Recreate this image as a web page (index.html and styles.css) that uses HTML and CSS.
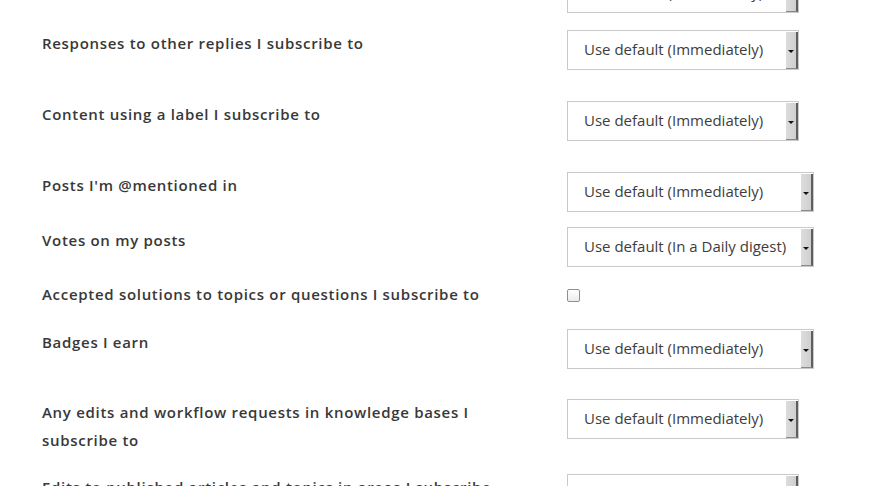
FILE: index.html
```html
<!DOCTYPE html>
<html lang="en">
<head>
<meta charset="utf-8">
<title>Notification settings</title>
<link rel="stylesheet" href="styles.css">
</head>
<body>
<div class="settings">
  <div class="row row--first">
    <div class="label"></div>
    <div class="select select--narrow"><span class="select-text">Use default (Immediately)</span><span class="select-btn"><span class="caret"></span></span></div>
  </div>
  <div class="row row--loose">
    <div class="label">Responses to other replies I subscribe to</div>
    <div class="select select--narrow"><span class="select-text">Use default (Immediately)</span><span class="select-btn"><span class="caret"></span></span></div>
  </div>
  <div class="row row--loose">
    <div class="label">Content using a label I subscribe to</div>
    <div class="select select--narrow"><span class="select-text">Use default (Immediately)</span><span class="select-btn"><span class="caret"></span></span></div>
  </div>
  <div class="row">
    <div class="label">Posts I'm @mentioned in</div>
    <div class="select select--wide"><span class="select-text">Use default (Immediately)</span><span class="select-btn"><span class="caret"></span></span></div>
  </div>
  <div class="row row--tight">
    <div class="label">Votes on my posts</div>
    <div class="select select--wide"><span class="select-text">Use default (In a Daily digest)</span><span class="select-btn"><span class="caret"></span></span></div>
  </div>
  <div class="row row--check">
    <div class="label">Accepted solutions to topics or questions I subscribe to</div>
    <div class="check-wrap"><span class="checkbox"></span></div>
  </div>
  <div class="row row--loose2">
    <div class="label">Badges I earn</div>
    <div class="select select--wide"><span class="select-text">Use default (Immediately)</span><span class="select-btn"><span class="caret"></span></span></div>
  </div>
  <div class="row row--multi">
    <div class="label">Any edits and workflow requests in knowledge bases I subscribe to</div>
    <div class="select select--narrow"><span class="select-text">Use default (Immediately)</span><span class="select-btn"><span class="caret"></span></span></div>
  </div>
  <div class="row">
    <div class="label">Edits to published articles and topics in areas I subscribe to</div>
    <div class="select select--narrow"><span class="select-text">Use default (Immediately)</span><span class="select-btn"><span class="caret"></span></span></div>
  </div>
</div>
</body>
</html>
```
FILE: styles.css
```css
html, body {
  margin: 0;
  padding: 0;
  background: #ffffff;
  overflow: hidden;
}

body {
  font-family: "Open Sans", "Liberation Sans", sans-serif;
  color: #3b3b3b;
}

.settings {
  display: flex;
  flex-direction: column;
  padding-left: 42px;
  margin-top: -27px;
}

.row {
  display: flex;
  align-items: flex-start;
  margin-bottom: 15px;
}

.row--first { margin-bottom: 17px; }
.row--loose { margin-bottom: 31px; }
.row--tight { margin-bottom: 14px; }
.row--check { margin-bottom: 20px; }
.row--loose2 { margin-bottom: 30px; }
.row--multi { margin-bottom: 20px; }

.label {
  width: 456px;
  margin-right: 69px;
  font-size: 15px;
  font-weight: 600;
  line-height: 28px;
  letter-spacing: 0.7px;
  color: #383838;
  margin-top: -1px;
}

.select {
  box-sizing: border-box;
  height: 40px;
  display: flex;
  align-items: stretch;
  border: 1px solid #c9c9c9;
  background: #fff;
}

.select--narrow { width: 232px; }
.select--wide { width: 247px; }

.select-text {
  flex: 1;
  padding-left: 16px;
  font-size: 15px;
  line-height: 36px;
  color: #3d3d3d;
  white-space: nowrap;
  overflow: hidden;
}

.select-btn {
  width: 10px;
  margin: 1px 0 0 0;
  background: linear-gradient(to right, #dcdcdc, #cfcfcf);
  border-right: 2px solid #5e5e5e;
  border-bottom: 1px solid #8a8a8a;
  display: flex;
  align-items: center;
  justify-content: center;
}

.caret {
  width: 0;
  height: 0;
  margin-top: 2px;
  border-left: 3px solid transparent;
  border-right: 3px solid transparent;
  border-top: 3px solid #111;
}

.check-wrap {
  height: 28px;
  display: flex;
  align-items: center;
}

.checkbox {
  box-sizing: border-box;
  width: 13px;
  height: 13px;
  border: 1px solid #8f8f8f;
  border-radius: 2px;
  background: linear-gradient(#ffffff, #ececec);
}
```
